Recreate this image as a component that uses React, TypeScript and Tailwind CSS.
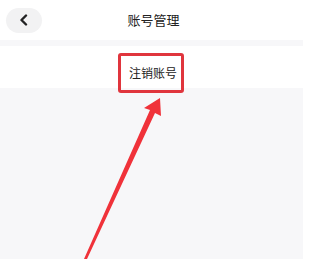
import React from "react";

export default function App() {
  return (
    <div
      className="relative w-[303px] h-[259px] overflow-hidden bg-[#f7f7f9]"
      style={{ fontFamily: '"Noto Sans CJK SC", "Noto Sans", sans-serif' }}
    >
      <div className="h-[40px] bg-white flex items-center relative">
        <div className="ml-[6px] w-[36px] h-[25px] rounded-full bg-[#f2f2f3] flex items-center justify-center">
          <svg width="10" height="12" viewBox="0 0 10 12">
            <path d="M7 1.5 L2.5 6 L7 10.5" fill="none" stroke="#222" strokeWidth="2.4" strokeLinecap="round" strokeLinejoin="round" />
          </svg>
        </div>
        <div className="absolute left-0 right-0 top-0 h-[40px] flex items-center justify-center pointer-events-none">
          <span className="text-[13px] text-[#222] ml-[4px]">账号管理</span>
        </div>
      </div>
      <div className="h-[6px]" />
      <div className="h-[42px] bg-white" />
      <div className="absolute left-[118px] top-[53px] w-[66px] h-[40px] border-[3px] border-[#e0353d] rounded-[3px] flex items-center justify-center">
        <span className="text-[12px] text-[#222] ml-[4px]">注销账号</span>
      </div>
      <svg className="absolute left-0 top-0" width="303" height="259" viewBox="0 0 303 259">
        <polygon
          points="160,98 144,108 150,110 84,259 87,259 155,113 161,116"
          fill="#f0323a"
        />
      </svg>
    </div>
  );
}
